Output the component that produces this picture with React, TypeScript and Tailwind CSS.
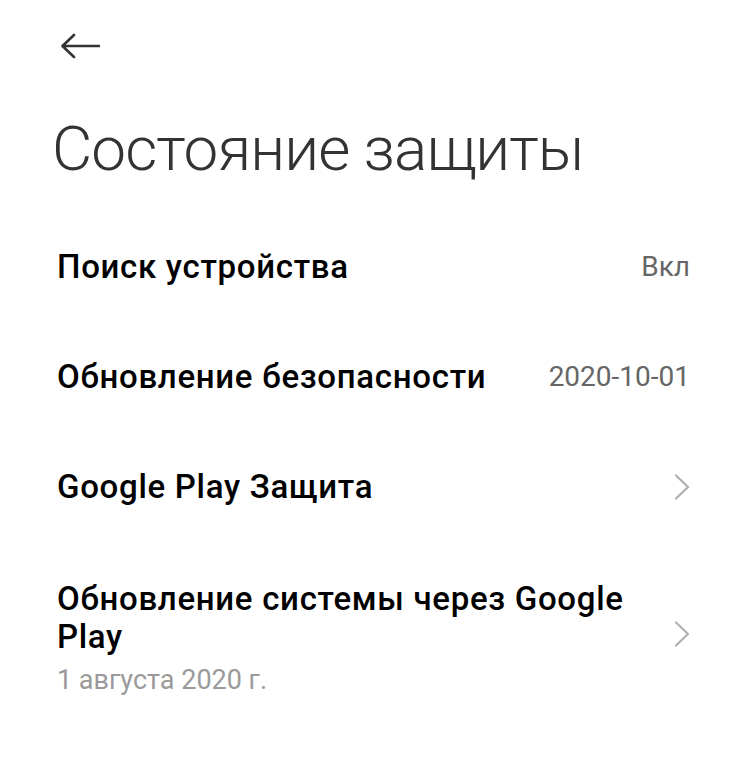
interface Row {
  title: string;
  value?: string;
  subtitle?: string;
  chevron?: boolean;
}

const rows: Row[] = [
  { title: "Поиск устройства", value: "Вкл" },
  { title: "Обновление безопасности", value: "2020-10-01" },
  { title: "Google Play Защита", chevron: true },
  {
    title: "Обновление системы через Google Play",
    subtitle: "1 августа 2020 г.",
    chevron: true,
  },
];

function BackArrow() {
  return (
    <svg width="40" height="26" viewBox="0 0 40 26" fill="none">
      <path
        d="M39 13H3M14 2L2.5 13L14 24"
        stroke="#333"
        strokeWidth="2.6"
        strokeLinecap="round"
        strokeLinejoin="round"
      />
    </svg>
  );
}

function Chevron() {
  return (
    <svg width="16" height="26" viewBox="0 0 16 26" fill="none" className="shrink-0">
      <path
        d="M2 1.5L14 13L2 24.5"
        stroke="#b0b0b0"
        strokeWidth="2.2"
        strokeLinecap="round"
        strokeLinejoin="round"
      />
    </svg>
  );
}

export default function App() {
  return (
    <div className="min-h-[776px] w-[746px] bg-white font-['Roboto',sans-serif]">
      <div className="pl-[60px] pt-[33px]">
        <BackArrow />
      </div>
      <h1 className="mt-[58px] pl-[52px] text-[62px] font-light leading-[63px] tracking-[-0.9px] text-[#333]">
        Состояние защиты
      </h1>
      <div className="mt-[32px]">
        {rows.map((row) => (
          <div
            key={row.title}
            className={
              row.subtitle
                ? "flex items-center justify-between pl-[57px] pr-[56px] pt-[38px] pb-[20px]"
                : "flex min-h-[110px] items-center justify-between pl-[57px] pr-[56px]"
            }
          >
            <div className="flex flex-col pr-[40px]">
              <span className="text-[33px] font-medium leading-[38px] tracking-[0.7px] text-black">
                {row.title}
              </span>
              {row.subtitle && (
                <span className="mt-[6px] text-[27px] leading-[36px] text-[#9a9a9a]">
                  {row.subtitle}
                </span>
              )}
            </div>
            {row.value && (
              <span className="shrink-0 text-[28px] text-[#666]">{row.value}</span>
            )}
            {row.chevron && (
              <div className={row.subtitle ? "mb-[10px]" : ""}>
                <Chevron />
              </div>
            )}
          </div>
        ))}
      </div>
    </div>
  );
}
